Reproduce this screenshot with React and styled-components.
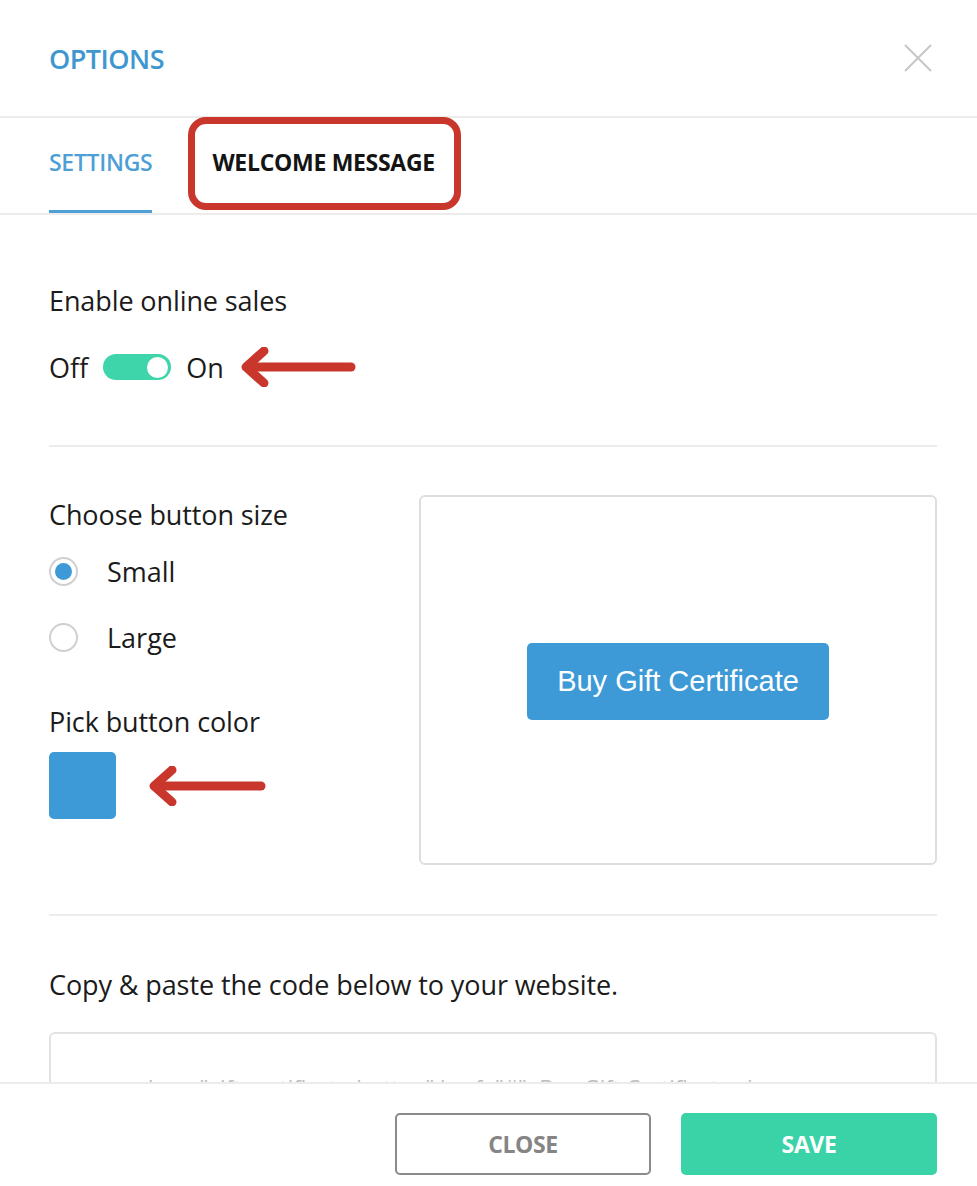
import React from "react";
import styled, { createGlobalStyle } from "styled-components";

const Global = createGlobalStyle`
  html, body { margin: 0; padding: 0; background: #fff; }
  body { font-family: "Open Sans", "Noto Sans", sans-serif; color: #1b1b1b; }
  * { box-sizing: border-box; }
`;

const Modal = styled.div`
  width: 977px;
  height: 1186px;
  display: flex;
  flex-direction: column;
  background: #fff;
  overflow: hidden;
`;

const Header = styled.header`
  height: 118px;
  flex: none;
  display: flex;
  align-items: center;
  justify-content: space-between;
  padding: 0 44px 0 49px;
  border-bottom: 2px solid #ececec;
`;

const Title = styled.h1`
  margin: 0;
  font-size: 27px;
  font-weight: 600;
  color: #3f97d0;
  letter-spacing: -0.5px;
  line-height: 1;
`;

const CloseX = styled.svg`
  width: 30px;
  height: 30px;
`;

const Tabs = styled.nav`
  height: 97px;
  flex: none;
  display: flex;
  align-items: stretch;
  gap: 60px;
  padding: 0 49px;
  border-bottom: 2px solid #ececec;
`;

const Tab = styled.div`
  position: relative;
  display: flex;
  align-items: center;
  font-size: 23px;
  font-weight: ${(p) => (p.$active ? 600 : 700)};
  letter-spacing: -0.3px;
  color: ${(p) => (p.$active ? "#4d9fd6" : "#141414")};
  padding-bottom: 4px;
  border-bottom: 3px solid ${(p) => (p.$active ? "#4d9fd6" : "transparent")};

  ${(p) =>
    p.$highlight &&
    `
    &::after {
      content: "";
      position: absolute;
      left: -24px;
      right: -26px;
      top: -1px;
      bottom: 0;
      border: 7px solid #c9372c;
      border-radius: 18px;
      pointer-events: none;
    }
  `}
`;

const Body = styled.main`
  flex: 1;
  min-height: 0;
  overflow: hidden;
  padding: 68px 40px 0 49px;
  display: flex;
  flex-direction: column;
  & > * { flex-shrink: 0; }
`;

const Label = styled.div`
  font-size: 27px;
  line-height: 36px;
  color: #1b1b1b;
  letter-spacing: -0.1px;
  margin-top: ${(p) => p.$top || 0}px;
`;

const ToggleRow = styled.div`
  display: flex;
  align-items: center;
  height: 36px;
  margin-top: 30px;
  font-size: 27px;
  gap: 15px;
`;

const Switch = styled.div`
  width: 68px;
  height: 26px;
  border-radius: 13px;
  background: #3dd5a9;
  display: flex;
  align-items: center;
  justify-content: flex-end;
  padding: 0 3px;
  &::before {
    content: "";
    width: 21px;
    height: 21px;
    border-radius: 50%;
    background: #fff;
  }
`;

const Arrow = styled.svg`
  flex: none;
  margin-left: ${(p) => p.$gap || 0}px;
`;

const Divider = styled.hr`
  border: none;
  height: 2px;
  background: #ececec;
  margin: ${(p) => p.$margin};
`;

const Grid = styled.div`
  display: grid;
  grid-template-columns: 370px 518px;
`;

const LeftCol = styled.div`
  padding-top: 2px;
  display: flex;
  flex-direction: column;
`;

const RadioRow = styled.label`
  display: flex;
  align-items: center;
  height: 36px;
  margin-top: ${(p) => p.$top}px;
  font-size: 27px;
  gap: 29px;
`;

const RadioDot = styled.span`
  width: 29px;
  height: 29px;
  border-radius: 50%;
  border: 2px solid #d0d0d0;
  display: flex;
  align-items: center;
  justify-content: center;
  &::before {
    content: "";
    width: 17px;
    height: 17px;
    border-radius: 50%;
    background: ${(p) => (p.$checked ? "#3d9ad7" : "transparent")};
  }
`;

const SwatchRow = styled.div`
  display: flex;
  align-items: center;
  margin-top: 12px;
`;

const Swatch = styled.div`
  width: 67px;
  height: 67px;
  border-radius: 5px;
  background: ${(p) => p.$color};
`;

const Preview = styled.div`
  height: 370px;
  border: 2px solid #dedede;
  border-radius: 6px;
  display: flex;
  align-items: center;
  justify-content: center;
`;

const GiftButton = styled.button`
  width: 302px;
  height: 77px;
  border: none;
  border-radius: 5px;
  background: #3d9ad7;
  color: #fff;
  font-family: "Liberation Sans", Arial, sans-serif;
  font-size: 29px;
  margin-top: 2px;
  padding: 0;
`;

const CodeBox = styled.div`
  margin-top: 29px;
  border: 2px solid #e2e2e2;
  border-radius: 6px;
  height: 200px;
  padding: 38px 56px;
  font-size: 22px;
  color: #bdbdbd;
  white-space: nowrap;
`;

const Footer = styled.footer`
  height: 104px;
  flex: none;
  border-top: 2px solid #ececec;
  display: flex;
  justify-content: flex-end;
  align-items: flex-start;
  gap: 30px;
  padding: 29px 40px 0 0;
`;

const FooterButton = styled.button`
  width: 256px;
  height: 62px;
  border-radius: 5px;
  font-family: "Open Sans", sans-serif;
  font-size: 23px;
  font-weight: 700;
  letter-spacing: -0.4px;
  border: ${(p) => (p.$primary ? "none" : "2px solid #8a8a8a")};
  background: ${(p) => (p.$primary ? "#3ad2a7" : "#fff")};
  color: ${(p) => (p.$primary ? "#fff" : "#858585")};
`;

const RedArrow = ({ width, gap }) => (
  <Arrow $gap={gap} width={width} height="40" viewBox={`0 0 ${width} 40`}>
    <g fill="none" stroke="#c9372c" strokeWidth="9" strokeLinecap="round" strokeLinejoin="round">
      <path d={`M${width - 5} 20 H7`} />
      <path d="M24 4 L6 20 L24 36" />
    </g>
  </Arrow>
);

export default function App() {
  return (
    <>
      <Global />
      <Modal>
        <Header>
          <Title>OPTIONS</Title>
          <CloseX viewBox="0 0 30 30">
            <path d="M2 2 L28 28 M28 2 L2 28" stroke="#c6c6c6" strokeWidth="2" fill="none" />
          </CloseX>
        </Header>
        <Tabs>
          <Tab $active>SETTINGS</Tab>
          <Tab $highlight>WELCOME MESSAGE</Tab>
        </Tabs>
        <Body>
          <Label>Enable online sales</Label>
          <ToggleRow>
            <span>Off</span>
            <Switch />
            <span>On</span>
            <RedArrow width={116} gap={1} />
          </ToggleRow>
          <Divider $margin="60px 0 48px" />
          <Grid>
            <LeftCol>
              <Label>Choose button size</Label>
              <RadioRow $top={20}>
                <RadioDot $checked />
                Small
              </RadioRow>
              <RadioRow $top={30}>
                <RadioDot />
                Large
              </RadioRow>
              <Label $top={49}>Pick button color</Label>
              <SwatchRow>
                <Swatch $color="#3d9ad7" />
                <RedArrow width={118} gap={32} />
              </SwatchRow>
            </LeftCol>
            <Preview>
              <GiftButton>Buy Gift Certificate</GiftButton>
            </Preview>
          </Grid>
          <Divider $margin="49px 0 51px" />
          <Label>Copy &amp; paste the code below to your website.</Label>
          <CodeBox>{'<a class="gift-certificate-button" href="#">Buy Gift Certificate</a>'}</CodeBox>
        </Body>
        <Footer>
          <FooterButton>CLOSE</FooterButton>
          <FooterButton $primary>SAVE</FooterButton>
        </Footer>
      </Modal>
    </>
  );
}
